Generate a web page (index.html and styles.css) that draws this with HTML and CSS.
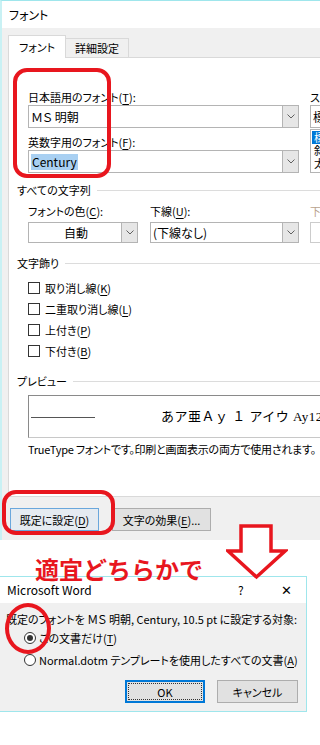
FILE: index.html
```html
<!DOCTYPE html>
<html lang="ja">
<head>
  <meta charset="UTF-8">
  <title>フォント</title>
  <link rel="stylesheet" href="styles.css">
</head>
<body>
  <div class="win font-win">
    <div class="titlebar">フォント</div>
    <div class="win-body">
      <div class="tabs">
        <div class="tab active">フォント</div>
        <div class="tab">詳細設定</div>
      </div>

      <div class="panel">
        <div class="font-row">
          <div class="col-main">
            <div class="lbl">日本語用のフォント(<u>T</u>):</div>
            <div class="combo">
              <span class="combo-text">ＭＳ 明朝</span>
              <span class="drop"><svg width="8" height="5" viewBox="0 0 8 5"><polyline points="0.5,0.5 4,4 7.5,0.5" fill="none" stroke="#606060"/></svg></span>
            </div>
            <div class="lbl second">英数字用のフォント(<u>F</u>):</div>
            <div class="combo">
              <span class="combo-text"><span class="sel">Century</span></span>
              <span class="drop"><svg width="8" height="5" viewBox="0 0 8 5"><polyline points="0.5,0.5 4,4 7.5,0.5" fill="none" stroke="#606060"/></svg></span>
            </div>
          </div>
          <div class="col-side">
            <div class="lbl">スタイル(<u>Y</u>):</div>
            <div class="combo plain"><span class="combo-text">標準</span></div>
            <div class="listbox">
              <div class="item on">標準</div>
              <div class="item">斜体</div>
              <div class="item">太字</div>
            </div>
          </div>
        </div>

        <div class="group">すべての文字列</div>
        <div class="color-row">
          <div class="field w-color">
            <div class="lbl">フォントの色(<u>C</u>):</div>
            <div class="combo small">
              <span class="combo-text center">自動</span>
              <span class="drop"><svg width="8" height="5" viewBox="0 0 8 5"><polyline points="0.5,0.5 4,4 7.5,0.5" fill="none" stroke="#606060"/></svg></span>
            </div>
          </div>
          <div class="field w-under">
            <div class="lbl">下線(<u>U</u>):</div>
            <div class="combo small">
              <span class="combo-text">(下線なし)</span>
              <span class="drop"><svg width="8" height="5" viewBox="0 0 8 5"><polyline points="0.5,0.5 4,4 7.5,0.5" fill="none" stroke="#606060"/></svg></span>
            </div>
          </div>
          <div class="field w-ucolor">
            <div class="lbl off">下線の色(<u>I</u>):</div>
            <div class="combo small disabled"></div>
          </div>
        </div>

        <div class="group">文字飾り</div>
        <div class="checks">
          <div class="check"><span class="box"></span>取り消し線(<u>K</u>)</div>
          <div class="check"><span class="box"></span>二重取り消し線(<u>L</u>)</div>
          <div class="check"><span class="box"></span>上付き(<u>P</u>)</div>
          <div class="check"><span class="box"></span>下付き(<u>B</u>)</div>
        </div>

        <div class="group">プレビュー</div>
        <div class="preview">
          <span class="preview-line"></span>
          <span class="preview-text">あア亜Ａｙ １ アイウ Ay12</span>
        </div>
        <div class="desc">TrueType フォントです。印刷と画面表示の両方で使用されます。</div>
      </div>

      <div class="footer">
        <button class="btn default w-def">既定に設定(<u>D</u>)</button>
        <button class="btn w-eff">文字の効果(<u>E</u>)...</button>
      </div>
    </div>
  </div>

  <div class="win word-win">
    <div class="titlebar latin">
      Microsoft Word
      <span class="tb-help">?</span>
      <span class="tb-close">✕</span>
    </div>
    <div class="msg-body">
      <div class="msg">既定のフォントを ＭＳ 明朝, Century, 10.5 pt に設定する対象:</div>
      <div class="radio"><span class="dot on"></span>この文書だけ(<u>T</u>)</div>
      <div class="radio"><span class="dot"></span>Normal.dotm テンプレートを使用したすべての文書(<u>A</u>)</div>
      <div class="msg-buttons">
        <button class="btn ok">OK</button>
        <button class="btn cancel">キャンセル</button>
      </div>
    </div>
  </div>

  <!-- annotations drawn over the screenshot -->
  <div class="mark mark-fonts"></div>
  <div class="mark mark-default"></div>
  <div class="mark mark-radio"></div>
  <div class="mark-text">適宜どちらかで</div>
  <svg class="mark-arrow" width="62" height="58" viewBox="0 0 62 58">
    <polygon points="15,3 45,3 45,28 59,28 30.5,54 2,28 15,28" fill="#fff" stroke="#e8161e" stroke-width="3.5" stroke-linejoin="miter"/>
  </svg>
</body>
</html>
```

FILE: styles.css
```css
body {
  margin: 0;
  width: 320px;
  height: 745px;
  overflow: hidden;
  position: relative;
  background: #fff;
  font-family: "Noto Sans CJK JP", sans-serif;
  font-feature-settings: "palt";
  font-size: 11px;
  line-height: 16px;
  color: #000;
}

u {
  text-decoration-thickness: 1px;
  text-underline-offset: 2px;
}

.win {
  box-sizing: border-box;
  border-top: 1px solid #9fe6ec;
}

.titlebar {
  height: 27px;
  line-height: 27px;
  padding-left: 7px;
  background: #fff;
  display: flex;
  font-size: 12px;
}

/* font dialog */
.font-win {
  width: 430px;
  border-left: 2px solid #c9f1f4;
}

.win-body {
  background: #f0f0f0;
  padding: 7px 0 0 6px;
}

.tabs {
  display: flex;
  align-items: flex-end;
  height: 22px;
}

.tab {
  box-sizing: border-box;
  width: 63px;
  height: 19px;
  line-height: 18px;
  text-align: center;
  border: 1px solid #d9d9d9;
  border-left: 0;
  border-bottom: 0;
}

.tab.active {
  width: 58px;
  height: 23px;
  line-height: 22px;
  margin-bottom: -1px;
  background: #fff;
  border-left: 1px solid #d9d9d9;
  position: relative;
}

.panel {
  box-sizing: border-box;
  height: 440px;
  background: #fff;
  border: 1px solid #d9d9d9;
  padding: 31px 0 0 8px;
}

.lbl {
  height: 16px;
  white-space: nowrap;
}

.lbl.second {
  margin-top: 6px;
}

.lbl.off {
  color: #b9a38e;
}

.font-row {
  display: flex;
  gap: 11px;
  padding-left: 11px;
}

.col-main {
  width: 271px;
}

.col-side {
  width: 100px;
}

.combo {
  box-sizing: border-box;
  height: 23px;
  border: 1px solid #b4b4b4;
  background: #fff;
  display: flex;
  align-items: center;
}

.combo.small {
  height: 21px;
}

.combo.disabled {
  border-color: #cccccc;
}

.combo-text {
  flex: 1;
  padding-left: 2px;
  white-space: nowrap;
  overflow: hidden;
  font-size: 12px;
}

.combo-text.center {
  text-align: center;
}

.sel {
  background: #a9d0f2;
  padding: 0 1px;
}

.drop {
  align-self: stretch;
  flex-shrink: 0;
  width: 15px;
  background: #e6e6e6;
  border-left: 1px solid #b4b4b4;
  display: flex;
  align-items: center;
  justify-content: center;
}

.listbox {
  box-sizing: border-box;
  height: 44px;
  margin-top: 1px;
  border: 1px solid #b4b4b4;
  padding: 1px;
  line-height: 13px;
}

.item {
  padding-left: 2px;
}

.item.on {
  background: #0078d7;
  color: #fff;
}

.group {
  display: flex;
  align-items: center;
  margin-top: 9px;
  height: 16px;
  white-space: nowrap;
}

.group::after {
  content: "";
  flex: 1;
  height: 1px;
  margin-left: 6px;
  background: #dcdcdc;
}

.color-row {
  display: flex;
  padding-left: 11px;
  margin-top: 5px;
}

.color-row .lbl {
  margin-bottom: 3px;
}

.w-color {
  width: 110px;
  margin-right: 12px;
}

.w-under {
  width: 149px;
  margin-right: 11px;
}

.w-ucolor {
  width: 100px;
}

.checks {
  margin-top: 6px;
  padding-left: 11px;
}

.check {
  height: 21px;
  display: flex;
  align-items: center;
  white-space: nowrap;
}

.box {
  box-sizing: border-box;
  flex-shrink: 0;
  width: 12px;
  height: 12px;
  border: 1px solid #333;
  margin-right: 5px;
}

.checks + .group,
.color-row + .group {
  margin-top: 12px;
}

.preview {
  box-sizing: border-box;
  height: 43px;
  margin: 6px 0 0 11px;
  border: 1px solid #8a8a8a;
  border-right-color: #c8c8c8;
  border-bottom-color: #c8c8c8;
  display: flex;
  align-items: center;
  padding-left: 2px;
}

.preview-line {
  flex-shrink: 0;
  width: 64px;
  height: 1px;
  background: #555;
  margin-top: 2px;
}

.preview-text {
  margin-left: 66px;
  font-family: "Liberation Serif", "Noto Sans CJK JP", serif;
  font-feature-settings: normal;
  font-size: 13px;
  white-space: nowrap;
  letter-spacing: 0.5px;
}

.desc {
  margin: 3px 0 0 11px;
  white-space: nowrap;
  letter-spacing: -0.25px;
}

.footer {
  display: flex;
  gap: 13px;
  padding: 11px 0 9px 2px;
}

.btn {
  box-sizing: border-box;
  height: 23px;
  padding: 0;
  font: inherit;
  font-feature-settings: "palt";
  background: #e1e1e1;
  border: 1px solid #adadad;
  color: #000;
}

.btn.default {
  background: #e5ebf1;
  border-color: #6aa7dc;
}

.w-def {
  width: 89px;
}

.w-eff {
  width: 99px;
}

/* confirmation dialog */
.word-win {
  width: 307px;
  margin-top: 36px;
  border-right: 1px solid #9fe6ec;
  border-bottom: 1px solid #9fe6ec;
}

.word-win .titlebar {
  height: 26px;
  line-height: 26px;
}

.tb-help {
  margin-left: auto;
  width: 12px;
}

.tb-close {
  margin-left: 31px;
  margin-right: 14px;
  font-size: 13px;
}

.msg-body {
  background: #f0f0f0;
  padding: 8px 8px 8px 6px;
}

.msg {
  white-space: nowrap;
}

.radio {
  height: 22px;
  display: flex;
  align-items: center;
  padding-left: 18px;
  white-space: nowrap;
}

.dot {
  box-sizing: border-box;
  flex-shrink: 0;
  width: 12px;
  height: 12px;
  border: 1px solid #333;
  border-radius: 50%;
  background: #fff;
  margin-right: 3px;
  display: flex;
  align-items: center;
  justify-content: center;
}

.dot.on::after {
  content: "";
  width: 6px;
  height: 6px;
  border-radius: 50%;
  background: #333;
}

.msg-buttons {
  display: flex;
  justify-content: flex-end;
  gap: 12px;
  margin-top: 9px;
}

.btn.ok {
  width: 80px;
  border: 2px solid #0078d7;
  outline: 1px dotted #333;
  outline-offset: -4px;
}

.btn.cancel {
  width: 81px;
}

/* red annotations */
.mark {
  position: absolute;
  box-sizing: border-box;
  border: 4px solid #e8161e;
  border-radius: 14px;
}

.mark-fonts {
  left: 13px;
  top: 68px;
  width: 98px;
  height: 110px;
}

.mark-default {
  left: 2px;
  top: 490px;
  width: 113px;
  height: 45px;
}

.mark-radio {
  left: 5px;
  top: 603px;
  width: 46px;
  height: 51px;
  border-radius: 50%;
}

.mark-text {
  position: absolute;
  left: 35px;
  top: 557px;
  font-size: 24px;
  line-height: 24px;
  font-weight: bold;
  color: #e8161e;
  white-space: nowrap;
  font-feature-settings: normal;
}

.mark-arrow {
  position: absolute;
  left: 226px;
  top: 523px;
}
```
